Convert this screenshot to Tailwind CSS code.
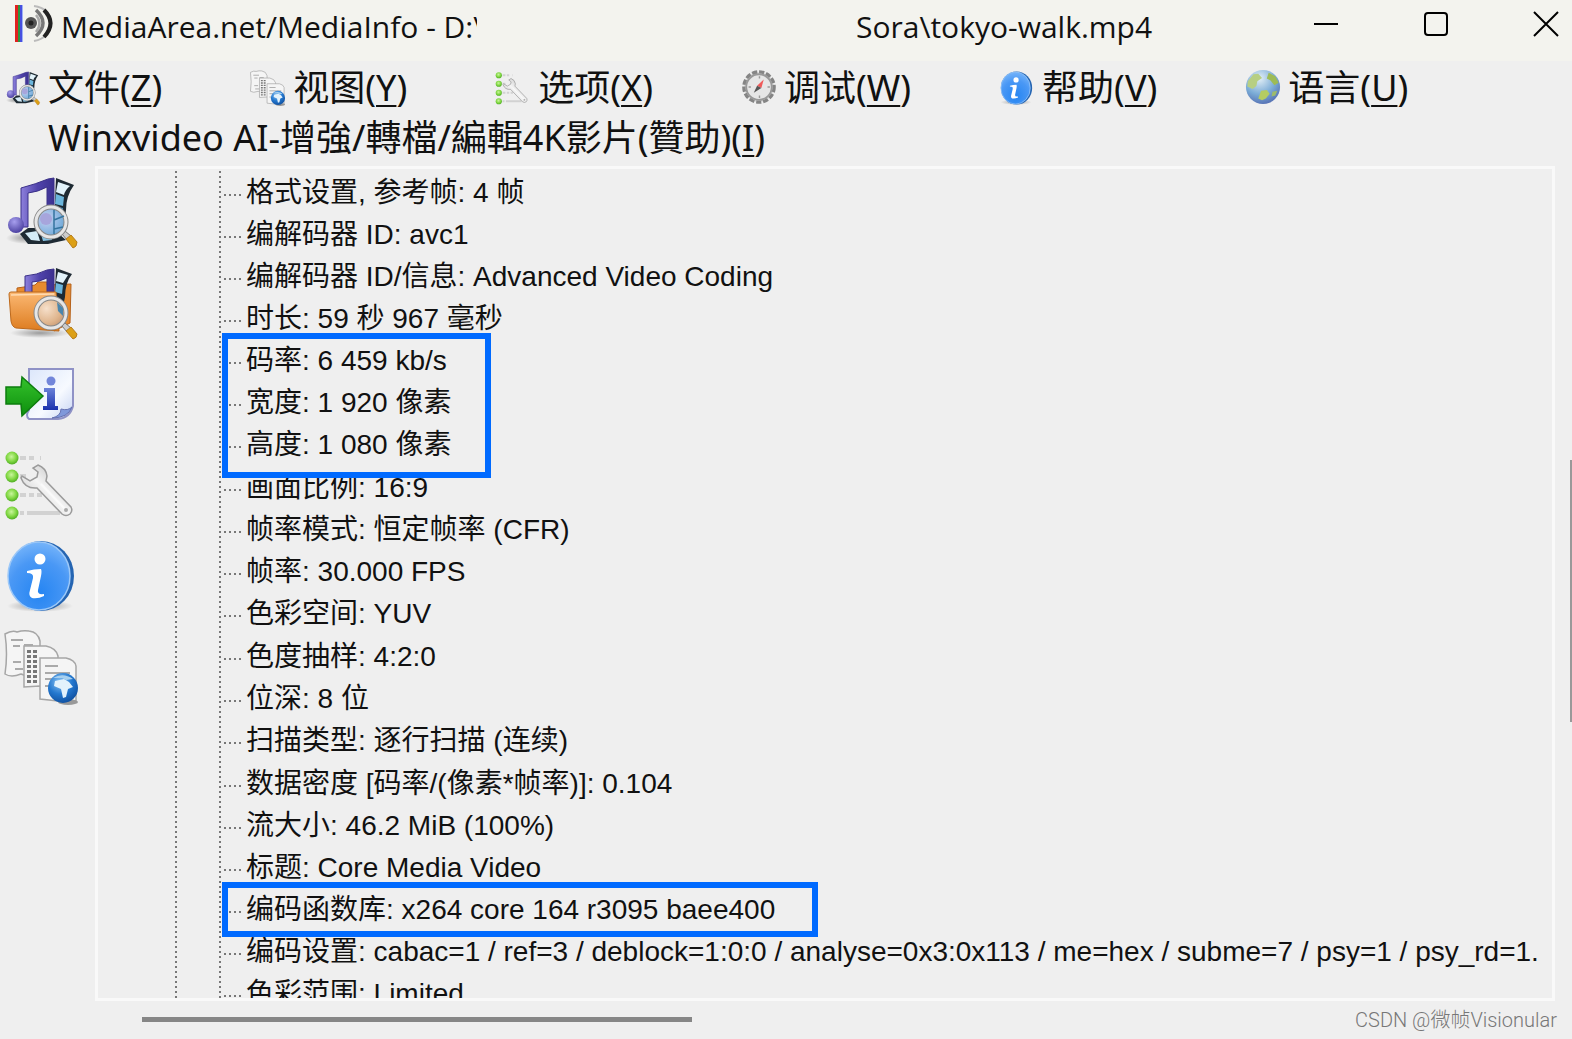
<!DOCTYPE html>
<html lang="zh-CN">
<head>
<meta charset="utf-8">
<title>MediaArea.net/MediaInfo</title>
<script src="https://cdn.jsdelivr.net/npm/@tailwindcss/browser@4"></script>
</head>
<body class="flex h-screen flex-col overflow-hidden bg-[#efefef] text-[#111]">

<svg class="h-0 w-0 shrink-0" aria-hidden="true">
  <defs>
    <linearGradient id="purple" x1="0" x2="1"><stop offset="0" stop-color="#8d80dc"/><stop offset=".5" stop-color="#5043ab"/><stop offset="1" stop-color="#3c3190"/></linearGradient>
    <radialGradient id="ball" cx=".4" cy=".3" r=".8"><stop offset="0" stop-color="#a79fee"/><stop offset="1" stop-color="#3f3496"/></radialGradient>
    <radialGradient id="lens" cx=".35" cy=".4" r=".8"><stop offset="0" stop-color="#c9cff0"/><stop offset=".5" stop-color="#8db8e2"/><stop offset="1" stop-color="#5a9ccb"/></radialGradient>
    <radialGradient id="lensWarm" cx=".35" cy=".35" r=".8"><stop offset="0" stop-color="#f6e0cb"/><stop offset=".6" stop-color="#dfb48c"/><stop offset="1" stop-color="#b98a67"/></radialGradient>
    <linearGradient id="orange" x1="0" y1="0" x2="0" y2="1"><stop offset="0" stop-color="#fbb873"/><stop offset="1" stop-color="#dd7c1f"/></linearGradient>
    <linearGradient id="page" x1="0" y1="0" x2="1" y2="1"><stop offset="0" stop-color="#dbe6fb"/><stop offset=".6" stop-color="#f7faff"/><stop offset="1" stop-color="#c4d2f2"/></linearGradient>
    <linearGradient id="arrow" x1="0" y1="0" x2="0" y2="1"><stop offset="0" stop-color="#35c22c"/><stop offset="1" stop-color="#0d8f0d"/></linearGradient>
    <linearGradient id="ink" x1="0" y1="0" x2="0" y2="1"><stop offset="0" stop-color="#6b82d8"/><stop offset="1" stop-color="#1a31ad"/></linearGradient>
    <radialGradient id="green" cx=".45" cy=".4" r=".6"><stop offset="0" stop-color="#c9f59c"/><stop offset=".6" stop-color="#82d844"/><stop offset="1" stop-color="#4fae22"/></radialGradient>
    <linearGradient id="steel" x1="0" y1="1" x2="1" y2="0"><stop offset="0" stop-color="#b5b5b5"/><stop offset=".5" stop-color="#f5f5f5"/><stop offset="1" stop-color="#a9a9a9"/></linearGradient>
    <radialGradient id="blue" cx=".5" cy=".75" r=".8"><stop offset="0" stop-color="#2585f2"/><stop offset=".6" stop-color="#4a98f5"/><stop offset="1" stop-color="#7db9fb"/></radialGradient>
    <radialGradient id="globe" cx=".4" cy=".3" r=".8"><stop offset="0" stop-color="#8cc4f2"/><stop offset=".5" stop-color="#2478cf"/><stop offset="1" stop-color="#0b4796"/></radialGradient>
    <radialGradient id="earth" cx=".4" cy=".25" r=".85"><stop offset="0" stop-color="#e3eff6"/><stop offset=".55" stop-color="#7aabd6"/><stop offset="1" stop-color="#4c62ab"/></radialGradient>
    <radialGradient id="shadow"><stop offset="0" stop-color="#000" stop-opacity=".35"/><stop offset="1" stop-color="#000" stop-opacity="0"/></radialGradient>

    <symbol id="i-file" viewBox="0 0 76 76">
      <ellipse cx="22" cy="64" rx="20" ry="6" fill="url(#shadow)"/>
      <path d="M52 4L70 11Q62 22 62 36L60 50H50Z" fill="#1e2a33"/>
      <path d="M54 8L66 12Q61 16 60 21L52 18Z" fill="#e2f3fb"/><path d="M52 20L60 23L59 32L51 30Z" fill="#6cb6dd"/><path d="M51 32L59 34V44L51 42Z" fill="#3b8cc0"/>
      <path d="M16 60L24 70L44 70L62 66L48 54L24 54Z" fill="#1e2a33"/>
      <path d="M21 59L27 66L36 67L33 57Z" fill="#d5ecf7"/><path d="M36 57L39 67L48 66L45 56Z" fill="#86c2e2"/>
      <path d="M17 14Q32 10 44 5L50 4V42H43V13Q34 18 24 19V53H17Z" fill="url(#purple)" stroke="#3a3088" stroke-width="1"/>
      <circle cx="12" cy="51" r="8" fill="url(#ball)"/>
      <path d="M58 60L61 57L67 62L63 66Z" fill="#ccc" stroke="#777"/>
      <path d="M62 65L67 61L73 68Q73 73 69 74Z" fill="#dca016" stroke="#b67c1c"/>
      <circle cx="47" cy="48" r="15" fill="url(#lens)" stroke="#888" stroke-width="5"/><circle cx="47" cy="48" r="15" fill="none" stroke="#e6e6e6" stroke-width="3"/>
      <circle cx="42" cy="45" r="6" fill="#a7a5dc"/><path d="M50 36V60M50 46L60 42M50 55L59 53" stroke="#34749f" stroke-width="1.5" fill="none"/>
    </symbol>
    <symbol id="i-folder" viewBox="0 0 76 76">
      <ellipse cx="36" cy="68" rx="30" ry="5" fill="url(#shadow)"/>
      <path d="M13 28V23L20 22L31 20L34 17L43 17V20L67 19L66 58L50 66Z" fill="#e88b2e" stroke="#b5611a"/>
      <path d="M52 3L68 9Q61 18 61 32L58 46H50Z" fill="#1e2a33"/>
      <path d="M54 7L64 10L59 18L52 16Z" fill="#e2f3fb"/><path d="M52 18L59 20L58 29L51 27Z" fill="#6cb6dd"/>
      <path d="M21 11Q33 10 43 5L50 4V34H43V13Q35 17 28 17V34H21Z" fill="url(#purple)" stroke="#3a3088"/>
      <path d="M5 29Q5 27 7 27L52 27L55 66L12 63Q8 62 7 56Z" fill="url(#orange)" stroke="#bd691b"/>
      <path d="M7 30L50 29" stroke="#ffdab0" stroke-width="1.5"/>
      <path d="M58 61L61 58L67 63L63 67Z" fill="#ccc" stroke="#777"/>
      <path d="M62 66L67 62L73 69Q73 73 69 74Z" fill="#dca016" stroke="#b67c1c"/>
      <circle cx="47" cy="48" r="15" fill="url(#lensWarm)" stroke="#888" stroke-width="5"/><circle cx="47" cy="48" r="15" fill="none" stroke="#e6e6e6" stroke-width="3"/>
      <path d="M53 37L59 43L59 51L54 46Z" fill="#4b86ad"/>
    </symbol>
    <symbol id="i-export" viewBox="0 0 76 76">
      <path d="M25 13H69V50Q66 62 54 63H25Q21 60 25 54Z" fill="url(#page)" stroke="#8f92c6" stroke-width="2"/>
      <path d="M48 62Q57 60 57 53Q64 55 68 51Q64 62 48 62Z" fill="#7f98da" stroke="#6672b2"/>
      <circle cx="47" cy="25" r="4.500" fill="#7286da"/>
      <path d="M40 32H51V50H54V54H39V50H43V36H40Z" fill="url(#ink)"/>
      <path d="M2 31H17L18 21L39 40L18 60L17 48H2Z" fill="url(#arrow)" stroke="#0d7d0e" stroke-width="1.500"/>
    </symbol>
    <symbol id="i-options" viewBox="0 0 76 76">
      <path d="M16 11H22M25 11H30M36 11H37M16 29H22M16 48H22M25 48H30M33 48H38M16 66H20M23 66H56" stroke="#d2d2d2" stroke-width="4"/>
      <circle cx="8" cy="11" r="6.500" fill="url(#green)"/><circle cx="8" cy="29" r="6.500" fill="url(#green)"/><circle cx="8" cy="48" r="6.500" fill="url(#green)"/><circle cx="8" cy="66" r="6.500" fill="url(#green)"/>
      <path d="M34 18Q42 21 43 29L42 34L67 60Q69 64 66 67Q62 70 58 67L33 41Q21 42 17 31L18 29L26 34L33 30L34 25L29 21Z" fill="url(#steel)" stroke="#9b9b9b" stroke-width="1.500"/>
      <path d="M37 37L62 63" stroke="#fafafa" stroke-width="2"/><circle cx="62" cy="63" r="2" fill="#aaa"/>
    </symbol>
    <symbol id="i-info" viewBox="0 0 76 76">
      <ellipse cx="36" cy="68" rx="33" ry="6" fill="url(#shadow)"/>
      <ellipse cx="37" cy="38" rx="33" ry="35" fill="#2565b2"/>
      <ellipse cx="35" cy="38" rx="31" ry="34" fill="url(#blue)" stroke="#9cc8f8" stroke-width="1.500"/>
      <circle cx="36" cy="21" r="5.500" fill="#fff"/>
      <path d="M23 33Q30 31 37 31Q38 33 37 38L34 52Q33 57 40 56V58Q34 61 28 60Q24 58 26 52L29 40Q30 35 23 35Z" fill="#fff"/>
    </symbol>
    <symbol id="i-view" viewBox="0 0 76 76">
      <g fill="#f5f5f5" stroke="#a6a6a6" stroke-width="1.500">
        <path d="M1 5Q8 1 13 3Q19 1 25 2Q34 3 36 12V44Q26 49 17 45Q7 49 1 45Q4 25 1 5Z"/>
        <path d="M20 17H42Q52 19 54 27V56Q44 58 36 57L20 58Z"/>
        <path d="M36 29H62Q71 31 72 37V72H54L36 70Z"/>
      </g>
      <path d="M7 11H19M9 17H16M20 16H29M9 33H17M11 40H19M41 37H54M41 44H66M41 50H55M41 57H48" stroke="#aaa" stroke-width="2"/>
      <path d="M25 21V54M31 21V54" stroke="#777" stroke-width="4" stroke-dasharray="3 2"/>
      <ellipse cx="64" cy="73" rx="10" ry="3" fill="#999"/>
      <circle cx="59" cy="59" r="15" fill="url(#globe)"/>
      <path d="M51 52L60 50L65 53L69 58L64 60L62 68L59 69L57 60L50 57Z" fill="#e3f2fc"/><path d="M49 49Q59 43 69 50L62 51L58 49Z" fill="#a7d0ef"/>
    </symbol>
    <symbol id="i-debug" viewBox="0 0 76 76">
      <circle cx="38" cy="36" r="32" fill="#dcdcdc" stroke="#858585" stroke-width="7" stroke-dasharray="11 4"/>
      <circle cx="38" cy="36" r="27" fill="#e6e6e6" stroke="#999" stroke-width="4"/>
      <path d="M39 13V18M39 54V59M16 36H21M56 36H61" stroke="#999" stroke-width="3"/>
      <path d="M48 20L43 38L34 33Z" fill="#f05a5a"/><path d="M27 48L34 33L43 38Z" fill="#555"/>
    </symbol>
    <symbol id="i-lang" viewBox="0 0 76 76">
      <circle cx="38" cy="36" r="36" fill="url(#earth)"/>
      <path d="M6 24L18 9L28 8L36 17L26 24L24 34L16 40L5 35Z" fill="#b7cf83"/>
      <path d="M50 6L64 13L71 27L62 32L54 22L46 18Z" fill="#9dbb55"/>
      <path d="M34 44L46 42L52 50L44 60L36 64L28 60Z" fill="#b4cc62"/><path d="M58 46L68 44L64 54L56 56Z" fill="#9dbb6a"/>
    </symbol>
  </defs>
</svg>

<header class="flex h-[61px] shrink-0 items-start bg-[#f3f3ee] pl-[15px] font-['Open_Sans','Noto_Sans',sans-serif] text-[30px] leading-[53px]">
  <svg class="mt-[4px] h-[40px] w-[40px] shrink-0" viewBox="0 0 40 40" aria-hidden="true">
    <path d="M0 1H3V38H0Z" fill="#e02020"/><path d="M3 1H5V38H3Z" fill="#2c9640"/><path d="M5 1H7V38H5Z" fill="#4750df"/><path d="M7 1H8V38H7Z" fill="#9eb1f5"/>
    <circle cx="16" cy="19" r="6" fill="#555"/><circle cx="16" cy="19" r="2.500" fill="#222"/>
    <path d="M21 11Q28 19 21 28" fill="none" stroke="#aaa" stroke-width="2.500"/>
    <path d="M21 6Q35 19 21 32" fill="none" stroke="#777" stroke-width="3.500"/>
    <path d="M19 2Q35 4 36 19Q35 34 19 37" fill="none" stroke="#bbb" stroke-width="2"/><path d="M29 6Q42 19 29 33" fill="none" stroke="#222" stroke-width="4"/>
  </svg>
  <div class="ml-[6px] w-[416px] shrink-0 overflow-hidden whitespace-nowrap">MediaArea.net/MediaInfo - D:\</div>
  <div class="ml-[379px] whitespace-nowrap">Sora\tokyo-walk.mp4</div>
  <div class="ml-auto flex gap-[62px] pr-[2px]">
    <button type="button" aria-label="最小化" class="flex h-[48px] w-[48px] items-center justify-center"><svg class="h-[26px] w-[26px]" viewBox="0 0 26 26" fill="none" stroke="#000" stroke-width="2"><path d="M1 13H25"/></svg></button>
    <button type="button" aria-label="最大化" class="flex h-[48px] w-[48px] items-center justify-center"><svg class="h-[26px] w-[26px]" viewBox="0 0 26 26" fill="none" stroke="#000" stroke-width="2"><rect x="2" y="2" width="22" height="22" rx="3"/></svg></button>
    <button type="button" aria-label="关闭" class="flex h-[48px] w-[48px] items-center justify-center"><svg class="h-[26px] w-[26px]" viewBox="0 0 26 26" fill="none" stroke="#000" stroke-width="2"><path d="M1 1L25 25M25 1L1 25"/></svg></button>
  </div>
</header>

<nav class="h-[105px] shrink-0 pt-[2px] font-['Noto_Sans','Noto_Sans_CJK_SC',sans-serif] text-[36px] leading-[50px] whitespace-nowrap">
  <div class="flex gap-[88px] pl-[5px]">
    <button type="button" class="flex items-center gap-[7px]"><svg class="h-[36px] w-[36px]"><use href="#i-file"/></svg><span>文件(<u class="decoration-2 underline-offset-4">Z</u>)</span></button>
    <button type="button" class="flex items-center gap-[7px]"><svg class="h-[36px] w-[36px]"><use href="#i-view"/></svg><span>视图(<u class="decoration-2 underline-offset-4">Y</u>)</span></button>
    <button type="button" class="flex items-center gap-[7px]"><svg class="h-[36px] w-[36px]"><use href="#i-options"/></svg><span>选项(<u class="decoration-2 underline-offset-4">X</u>)</span></button>
    <button type="button" class="flex items-center gap-[7px]"><svg class="h-[36px] w-[36px]"><use href="#i-debug"/></svg><span>调试(<u class="decoration-2 underline-offset-4">W</u>)</span></button>
    <button type="button" class="flex items-center gap-[7px]"><svg class="h-[36px] w-[36px]"><use href="#i-info"/></svg><span>帮助(<u class="decoration-2 underline-offset-4">V</u>)</span></button>
    <button type="button" class="flex items-center gap-[7px]"><svg class="h-[36px] w-[36px]"><use href="#i-lang"/></svg><span>语言(<u class="decoration-2 underline-offset-4">U</u>)</span></button>
  </div>
  <button type="button" class="ml-[48px] font-['Noto_Sans','Noto_Sans_CJK_TC',sans-serif]">Winxvideo AI-增強/轉檔/編輯4K影片(贊助)(<u class="decoration-2 underline-offset-4">I</u>)</button>
</nav>

<div class="flex min-h-0 flex-1">
  <aside class="flex w-[95px] shrink-0 flex-col pl-[4px]" aria-label="工具栏">
    <button type="button" aria-label="打开文件" class="flex h-[91px] items-center"><svg class="h-[76px] w-[76px]"><use href="#i-file"/></svg></button>
    <button type="button" aria-label="打开文件夹" class="flex h-[91px] items-center"><svg class="h-[76px] w-[76px]"><use href="#i-folder"/></svg></button>
    <button type="button" aria-label="导出" class="flex h-[91px] items-center"><svg class="h-[76px] w-[76px]"><use href="#i-export"/></svg></button>
    <button type="button" aria-label="选项" class="flex h-[91px] items-center"><svg class="h-[76px] w-[76px]"><use href="#i-options"/></svg></button>
    <button type="button" aria-label="关于" class="flex h-[91px] items-center"><svg class="h-[76px] w-[76px]"><use href="#i-info"/></svg></button>
    <button type="button" aria-label="视图" class="flex h-[91px] items-center"><svg class="h-[76px] w-[76px]"><use href="#i-view"/></svg></button>
  </aside>

  <div class="flex min-w-0 flex-1 flex-col">
    <div class="flex min-h-0 flex-1">
      <main class="flex min-w-0 flex-1 overflow-hidden border-3 border-[#f9f9f9] pl-[77px]">
        <div class="mt-[2px] w-[2px] shrink-0 bg-[repeating-linear-gradient(#777_0_2px,transparent_2px_5px)]"></div>
        <div class="mt-[2px] ml-[42px] w-[2px] shrink-0 bg-[repeating-linear-gradient(#777_0_2px,transparent_2px_5px)]"></div>
        <ul class="ml-[1px] min-w-0 flex-1 pt-[3px] font-['Liberation_Sans','Noto_Sans_CJK_SC',sans-serif] text-[28px] leading-[42px] whitespace-nowrap [&_li]:flex [&_li]:h-[42px] [&_li]:items-center [&_li]:gap-[5px] [&_li]:before:mt-[4px] [&_li]:before:h-[2px] [&_li]:before:w-[19px] [&_li]:before:shrink-0 [&_li]:before:bg-[repeating-linear-gradient(90deg,transparent_0_2px,#777_2px_4px,transparent_4px_5px)] [&_li]:before:content-['']">
          <li>格式设置, 参考帧: 4 帧</li>
          <li>编解码器 ID: avc1</li>
          <li>编解码器 ID/信息: Advanced Video Coding</li>
          <li>时长: 59 秒 967 毫秒</li>
          <li class="relative">码率: 6 459 kb/s
            <span class="absolute -top-[7px] left-0 z-10 h-[145px] w-[269px] border-6 border-[#006aff]"></span></li>
          <li>宽度: 1 920 像素</li>
          <li class="mb-[1px]">高度: 1 080 像素</li>
          <li>画面比例: 16:9</li>
          <li>帧率模式: 恒定帧率 (CFR)</li>
          <li>帧率: 30.000 FPS</li>
          <li class="mb-[1px]">色彩空间: YUV</li>
          <li>色度抽样: 4:2:0</li>
          <li>位深: 8 位</li>
          <li class="mb-[1px]">扫描类型: 逐行扫描 (连续)</li>
          <li>数据密度 [码率/(像素*帧率)]: 0.104</li>
          <li>流大小: 46.2 MiB (100%)</li>
          <li>标题: Core Media Video</li>
          <li class="relative">编码函数库: x264 core 164 r3095 baee400
            <span class="absolute -top-[7px] left-0 z-10 h-[55px] w-[596px] border-6 border-[#006aff]"></span></li>
          <li>编码设置: cabac=1 / ref=3 / deblock=1:0:0 / analyse=0x3:0x113 / me=hex / subme=7 / psy=1 / psy_rd=1.</li>
          <li>色彩范围: Limited</li>
        </ul>
      </main>
      <div class="flex w-[17px] shrink-0 flex-col items-end pt-[294px]"><div class="h-[262px] w-[2px] bg-[#999]"></div></div>
    </div>
    <footer class="flex h-[38px] shrink-0 items-start justify-between pr-[15px] pl-[47px]">
      <div class="mt-[16px] h-[5px] w-[550px] bg-[#868686]"></div>
      <span class="font-['Roboto','Noto_Sans_CJK_SC',sans-serif] text-[20px] leading-[38px] font-light text-[#777]">CSDN @微帧Visionular</span>
    </footer>
  </div>
</div>
</body>
</html>
